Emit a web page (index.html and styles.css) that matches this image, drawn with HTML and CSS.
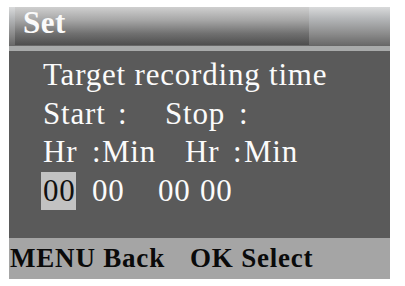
FILE: index.html
```html
<!DOCTYPE html>
<html lang="en">
<head>
    <meta charset="UTF-8">
    <title>Set</title>
    <link rel="stylesheet" href="styles.css">
</head>
<body>
    <div class="screen">
        <div class="header">
            <div class="title">Set</div>
        </div>
        <div class="rule"></div>
        <div class="content">
            <div class="line">Target recording time</div>
            <div class="line row">
                <span class="w-start">Start</span>
                <span class="w-colon1">:</span>
                <span class="w-stop">Stop</span>
                <span>:</span>
            </div>
            <div class="line row">
                <span class="w-hr">Hr</span>
                <span class="w-sep">:</span>
                <span class="w-min">Min</span>
                <span class="w-hr2">Hr</span>
                <span class="w-sep2">:</span>
                <span>Min</span>
            </div>
            <div class="line row">
                <span class="cursor">00</span>
                <span class="w-m1">00</span>
                <span class="w-h2">00</span>
                <span>00</span>
            </div>
        </div>
        <div class="footer">
            <span class="w-back">MENU Back</span>
            <span>OK Select</span>
        </div>
    </div>
</body>
</html>
```

FILE: styles.css
```css
body {
    margin: 0;
    background: #fff;
    font-family: "Liberation Serif", "Times New Roman", serif;
}
.screen {
    width: 381px;
    margin: 7px 0 0 9px;
}
.header {
    display: flex;
    height: 39px;
    background: linear-gradient(#d9dadb, #b4b6b8 30%, #8a8a8a 70%, #666 100%);
}
.title {
    width: 286px;
    margin-left: 6px;
    padding-left: 8px;
    height: 38px;
    line-height: 32px;
    font-size: 31px;
    font-weight: bold;
    letter-spacing: 0.5px;
    color: #fafafa;
    background: linear-gradient(#cfcfcf, #a6a6a6 35%, #707070 70%, #4e4e4e 100%);
}
.rule {
    height: 5px;
    background: #a8aaaa;
}
.content {
    height: 182px;
    padding: 5px 0 0 34px;
    background: #5a5a5a;
    color: #fbfbfb;
    font-size: 31px;
    letter-spacing: 0.8px;
}
.line {
    line-height: 38.7px;
    white-space: nowrap;
}
.row {
    display: flex;
    align-items: center;
}
.w-start { width: 75px; }
.w-colon1 { width: 47px; }
.w-stop { width: 74px; }
.w-hr { width: 49px; }
.w-sep { width: 10px; }
.w-min { width: 83px; }
.w-hr2 { width: 48px; }
.w-sep2 { width: 11px; }
.cursor {
    margin-left: -2px;
    margin-right: 16px;
    width: 35px;
    height: 38px;
    padding-left: 2px;
    box-sizing: border-box;
    line-height: 38px;
    background: #c2c2c2;
    color: #111;
}
.w-m1 { width: 66px; }
.w-h2 { width: 42px; }
.footer {
    display: flex;
    height: 41px;
    padding-left: 1px;
    line-height: 41px;
    background: #a5a5a5;
    color: #0a0a0a;
    font-size: 27px;
    font-weight: bold;
    letter-spacing: 0.8px;
    white-space: nowrap;
}
.w-back { width: 180px; }
```
